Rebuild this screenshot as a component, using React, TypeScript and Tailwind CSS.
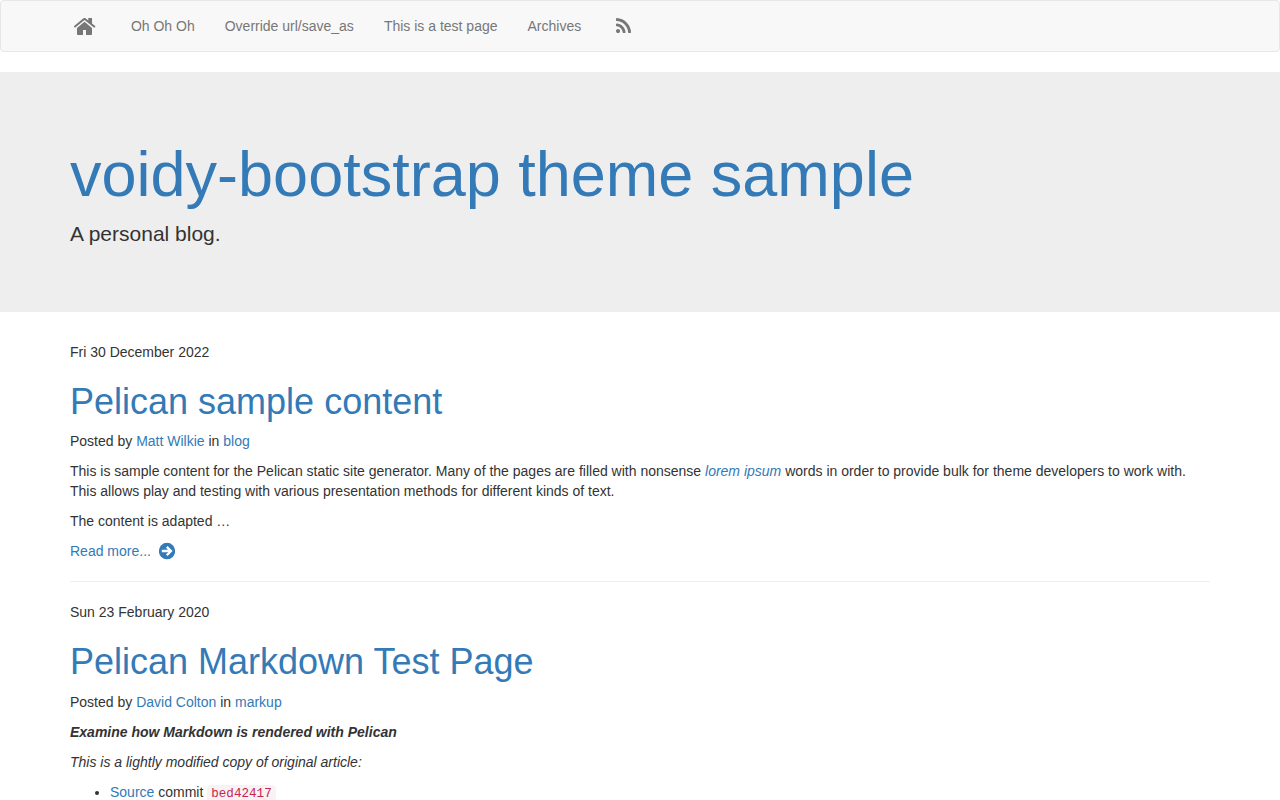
import React from "react";

const link = "text-[#337ab7] no-underline";

function HomeIcon() {
  return (
    <svg viewBox="0 0 22 18" className="h-[18px] w-[22px]" fill="currentColor">
      <path d="M3 9.900 10.500 3.700 18 9.900V16.200q0 .8-.8.8H12V12H9v5H3.800q-.8 0-.8-.8z" />
      <path d="M10.500-.1q.5 0 1 .4l2.800 2.300V0H18v5.500l3.200 2.600q.3.300.1.600l-.8.900q-.3.300-.6 0L10.500 2 1.300 9.600q-.3.300-.6 0L0 8.700q-.3-.4.1-.7L9.500.300q.5-.4 1-.4z" />
    </svg>
  );
}

function ArrowIcon() {
  return (
    <svg viewBox="0 0 16 17" className="mb-px ml-2 h-[17px] w-4 translate-y-[0.6px]" fill="none">
      <ellipse cx="8" cy="8.500" rx="8.100" ry="8.400" fill="#337ab7" />
      <path d="M7.800 4.300 12 8.500 7.800 12.700" stroke="#fff" strokeWidth="2.300" />
      <path d="M2.800 8.500H11" stroke="#fff" strokeWidth="2.500" />
    </svg>
  );
}

function NavItem({ children }: { children: React.ReactNode }) {
  return (
    <a href="#" className="block px-[15px] py-[15px] leading-5 text-[#777]">
      {children}
    </a>
  );
}

function Navbar() {
  return (
    <nav className="mb-5 h-[52px] rounded border border-[#e7e7e7] bg-[#f8f8f8]">
      <div className="mx-auto flex w-[1140px] items-center">
        <a href="#" className="flex h-[50px] w-[45.9px] items-start pt-[17px] pl-1 text-[#777]">
          <HomeIcon />
        </a>
        <NavItem>Oh Oh Oh</NavItem>
        <NavItem>Override url/save_as</NavItem>
        <NavItem>This is a test page</NavItem>
        <NavItem>Archives</NavItem>
        <a href="#" className="flex h-[50px] items-start pt-[17px] pl-5 text-[#777]">
          <svg viewBox="0 0 1408 1408" className="h-[15px] w-[15px]" fill="currentColor">
            <path d="M384 1216q0 80-56 136t-136 56-136-56-56-136 56-136 136-56 136 56 56 136zm512 123q2 28-17 48-18 21-47 21h-135q-25 0-43-16.500t-20-41.500q-22-229-184.500-391.500t-391.500-184.500q-25-2-41.500-20t-16.500-43v-135q0-29 21-47 17-17 43-17h5q160 13 306 80.500t259 181.500q114 113 181.500 259t80.500 306zm512 2q2 27-18 47-18 20-46 20h-143q-26 0-44.500-17.500t-19.500-42.500q-12-215-101-408.500t-231.500-336-336-231.500-408.500-102q-25-1-42.500-19.500t-17.500-43.500v-143q0-28 20-46 18-18 44-18h3q262 13 501.500 120t425.500 294q187 186 294 425.500t120 501.500z" />
          </svg>
        </a>
      </div>
    </nav>
  );
}

interface EntryProps {
  date: string;
  title: string;
  author: string;
  category: string;
  children: React.ReactNode;
}

function Entry({ date, title, author, category, children }: EntryProps) {
  return (
    <article>
      <p>{date}</p>
      <h1 className="mt-5 mb-2.5 text-[36px] leading-[39.4px]">
        <a href="#" className={link}>{title}</a>
      </h1>
      <p className="mb-2.5">
        Posted by <a href="#" className={link}>{author}</a> in <a href="#" className={link}>{category}</a>
      </p>
      {children}
    </article>
  );
}

export default function App() {
  return (
    <div className="h-[800px] overflow-hidden bg-white font-['Liberation_Sans',sans-serif] text-[14px] leading-5 text-[#333]">
      <Navbar />
      <header className="mb-[30px] h-60 bg-[#eee] pt-12">
        <div className="mx-auto w-[1140px]">
          <h1 className="mt-5 mb-2.5 text-[63px] leading-[69.3px]">
            <a href="#" className={link}>voidy-bootstrap theme sample</a>
          </h1>
          <p className="text-[21px] leading-[30px]">A personal blog.</p>
        </div>
      </header>
      <main className="mx-auto w-[1140px]">
        <Entry date="Fri 30 December 2022" title="Pelican sample content" author="Matt Wilkie" category="blog">
          <p className="mb-2.5">
            This is sample content for the Pelican static site generator. Many of the pages are filled with nonsense{" "}
            <a href="#" className={link}><em>lorem ipsum</em></a> words in order to provide bulk for theme developers to work with. This allows play and testing with various presentation methods for different kinds of text.
          </p>
          <p className="mb-2.5">The content is adapted …</p>
          <a href="#" className="flex h-5 items-center text-[#337ab7]">
            Read more...
            <ArrowIcon />
          </a>
        </Entry>
        <hr className="mt-5 mb-5 border-t border-[#eee]" />
        <Entry date="Sun 23 February 2020" title="Pelican Markdown Test Page" author="David Colton" category="markup">
          <p className="mb-2.5"><strong><em>Examine how Markdown is rendered with Pelican</em></strong></p>
          <p className="mb-2.5"><em>This is a lightly modified copy of original article:</em></p>
          <ul className="list-disc pl-10">
            <li>
              <a href="#" className={link}>Source</a> commit{" "}
              <code className="rounded bg-[#f9f2f4] px-1 py-0.5 font-['Liberation_Mono',monospace] text-[12.6px] text-[#c7254e]">bed42417</code>
            </li>
          </ul>
        </Entry>
      </main>
    </div>
  );
}
